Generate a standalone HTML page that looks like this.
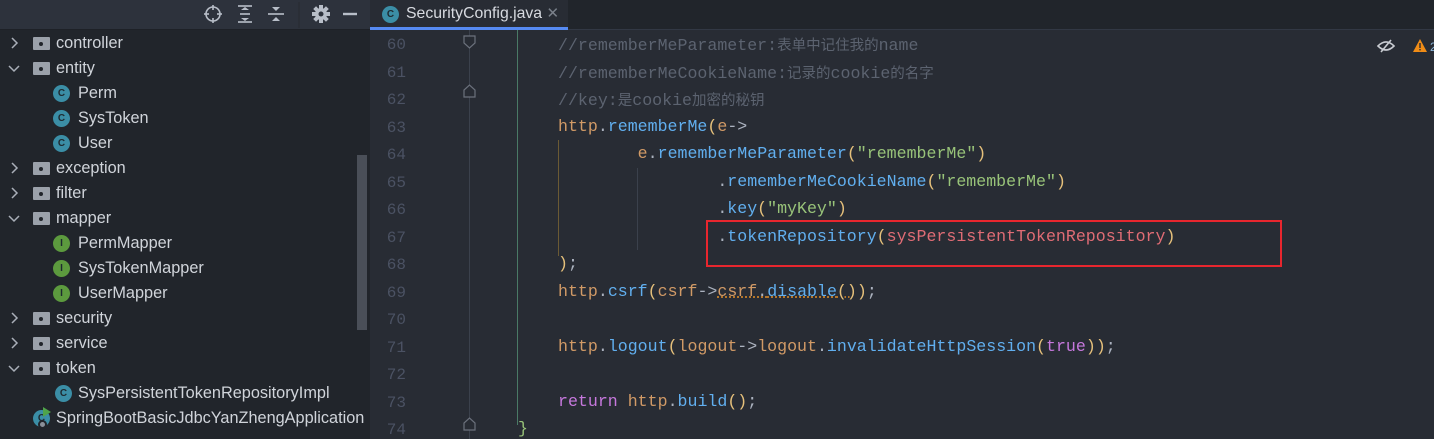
<!DOCTYPE html>
<html><head><meta charset="utf-8"><style>
*{margin:0;padding:0;box-sizing:border-box}
body{width:1434px;height:439px;overflow:hidden;background:#282c34;position:relative;font-family:"Liberation Sans","Noto Sans CJK SC",sans-serif}
#side{position:absolute;left:0;top:0;width:370px;height:439px;background:#21252b}
#sidehead{position:absolute;left:0;top:0;width:370px;height:30px;background:#2d323c;border-bottom:1px solid #1e2127}
#tabbar{position:absolute;left:370px;top:0;width:1064px;height:30px;background:#21252b;border-bottom:1px solid #323844}
#tab{position:absolute;left:370px;top:0;width:198px;height:30px;background:#282c34;border-bottom:3px solid #568af2;color:#d7dae0;font-size:15.8px;line-height:28px;padding-left:36px}
.ci{position:absolute;width:17px;height:17px;border-radius:50%;background:#3b8ea6;color:#1e2a30;font-size:10px;font-weight:bold;text-align:center;line-height:17px}
.row{position:absolute;height:25px;line-height:25px;color:#d0d4da;font-size:16.3px}
.chev{position:absolute;width:12px;height:12px}
.fold{position:absolute;width:17px;height:13px;background:#9ba1aa;border-radius:1px}
.fold::after{content:"";position:absolute;left:6px;top:5px;width:4px;height:4px;background:#21252b;border-radius:50%}
.ln{position:absolute;left:370px;width:36px;text-align:right;color:#4b5263;font-family:"Liberation Mono",monospace;font-size:16px}
.code{position:absolute;left:558px;font-family:"Liberation Mono","Noto Sans CJK SC",monospace;font-size:16.6px;color:#abb2bf;white-space:pre}
.cm{color:#5c6370}.o{color:#d19a66}.f{color:#61afef}.p{color:#e5c07b}.s{color:#98c379}.k{color:#c678dd}.r{color:#e06c75}
.cj{font-size:14.5px}
</style></head><body>
<div id="side"></div>
<div id="sidehead"></div>
<div id="tabbar"></div>
<div id="tab"><div class="ci" style="left:12px;top:6px">C</div>SecurityConfig.java <span style="color:#7a808a;font-size:15px">&#x2715;</span></div>
<svg style="position:absolute;left:200px;top:2px" width="170" height="26" viewBox="0 0 170 26">
<g stroke="#b8bec8" stroke-width="1.6" fill="none">
<circle cx="13" cy="12" r="7"/><line x1="13" y1="3" x2="13" y2="8"/><line x1="13" y1="16" x2="13" y2="21"/><line x1="4" y1="12" x2="9" y2="12"/><line x1="17" y1="12" x2="22" y2="12"/>
<line x1="38" y1="4" x2="52" y2="4"/><line x1="38" y1="20" x2="52" y2="20"/><line x1="40" y1="12" x2="50" y2="12"/>
<line x1="68" y1="12" x2="84" y2="12"/>
<line x1="143" y1="12" x2="157" y2="12" stroke-width="2.4"/>
</g>
<g fill="#b8bec8"><path d="M41 8 L45 5 L49 8Z"/><path d="M41 16 L45 19 L49 16Z"/><path d="M72 5 L80 5 L76 9Z"/><path d="M72 19 L80 19 L76 15Z"/>
<circle cx="121" cy="12" r="6"/><rect x="119" y="3" width="4" height="18"/><rect x="112" y="10" width="18" height="4"/><rect x="119" y="3" width="4" height="18" transform="rotate(45 121 12)"/><rect x="119" y="3" width="4" height="18" transform="rotate(-45 121 12)"/></g>
<circle cx="121" cy="12" r="2.5" fill="#2d323c"/>
<line x1="99" y1="0" x2="99" y2="28" stroke="#262a31"/>
</svg>
<svg style="position:absolute;left:0;top:0" width="30" height="439"><g stroke="#a9afb8" stroke-width="1.5" fill="none">
<path d="M12 38l5 5-5 5"/><path d="M9 66l5 5 5-5"/><path d="M12 163l5 5-5 5"/><path d="M12 188l5 5-5 5"/><path d="M9 216l5 5 5-5"/><path d="M12 313l5 5-5 5"/><path d="M12 338l5 5-5 5"/><path d="M9 366l5 5 5-5"/></g></svg>
<div class="fold" style="left:33px;top:37px"></div><div class="row" style="left:56px;top:31px">controller</div>
<div class="fold" style="left:33px;top:62px"></div><div class="row" style="left:56px;top:56px">entity</div>
<div class="ci" style="left:53px;top:85px">C</div><div class="row" style="left:78px;top:81px">Perm</div>
<div class="ci" style="left:53px;top:110px">C</div><div class="row" style="left:78px;top:106px">SysToken</div>
<div class="ci" style="left:53px;top:135px">C</div><div class="row" style="left:78px;top:131px">User</div>
<div class="fold" style="left:33px;top:162px"></div><div class="row" style="left:56px;top:156px">exception</div>
<div class="fold" style="left:33px;top:187px"></div><div class="row" style="left:56px;top:181px">filter</div>
<div class="fold" style="left:33px;top:212px"></div><div class="row" style="left:56px;top:206px">mapper</div>
<div class="ci" style="left:53px;top:235px;background:#5c9a3e">I</div><div class="row" style="left:78px;top:231px">PermMapper</div>
<div class="ci" style="left:53px;top:260px;background:#5c9a3e">I</div><div class="row" style="left:78px;top:256px">SysTokenMapper</div>
<div class="ci" style="left:53px;top:285px;background:#5c9a3e">I</div><div class="row" style="left:78px;top:281px">UserMapper</div>
<div class="fold" style="left:33px;top:312px"></div><div class="row" style="left:56px;top:306px">security</div>
<div class="fold" style="left:33px;top:337px"></div><div class="row" style="left:56px;top:331px">service</div>
<div class="fold" style="left:33px;top:362px"></div><div class="row" style="left:56px;top:356px">token</div>
<div class="ci" style="left:55px;top:385px">C</div><div class="row" style="left:78px;top:381px">SysPersistentTokenRepositoryImpl</div>
<div class="ci" style="left:33px;top:410px">C</div><div style="position:absolute;left:43px;top:407px;width:0;height:0;border-left:8px solid #4fa44a;border-top:5px solid transparent;border-bottom:5px solid transparent"></div><div style="position:absolute;left:38px;top:420px;width:9px;height:9px;border-radius:50%;background:#8a9099;border:2px solid #21252b"></div><div class="row" style="left:56px;top:406px">SpringBootBasicJdbcYanZhengApplication</div>
<div style="position:absolute;left:357px;top:155px;width:10px;height:175px;background:#4a4f58"></div>
<div style="position:absolute;left:469px;top:30px;width:1px;height:409px;background:#3b414c"></div>
<div style="position:absolute;left:517px;top:30px;width:1px;height:395px;background:#4a7a66"></div>
<div style="position:absolute;left:558px;top:140px;width:1px;height:116px;background:#6b5a34"></div>
<div style="position:absolute;left:637px;top:168px;width:1px;height:82px;background:#3b414c"></div>
<svg style="position:absolute;left:463px;top:35px" width="14" height="400"><g stroke="#6b717c" fill="#282c34" stroke-width="1.2"><path d="M1 1H12V8L6.5 13L1 8Z"/><path d="M1 62H12V55L6.5 50L1 55Z"/><path d="M1 395H12V388L6.5 383L1 388Z"/></g></svg>
<div class="ln" style="top:36px">60</div><div class="ln" style="top:64px">61</div><div class="ln" style="top:91px">62</div><div class="ln" style="top:119px">63</div><div class="ln" style="top:146px">64</div><div class="ln" style="top:174px">65</div><div class="ln" style="top:201px">66</div><div class="ln" style="top:229px">67</div><div class="ln" style="top:256px">68</div><div class="ln" style="top:284px">69</div><div class="ln" style="top:311px">70</div><div class="ln" style="top:339px">71</div><div class="ln" style="top:366px">72</div><div class="ln" style="top:394px">73</div><div class="ln" style="top:421px">74</div>
<div class="code cm" style="top:34px">//rememberMeParameter:<span class="cj">表单中记住我的</span>name</div>
<div class="code cm" style="top:62px">//rememberMeCookieName:<span class="cj">记录的</span>cookie<span class="cj">的名字</span></div>
<div class="code cm" style="top:89px">//key:<span class="cj">是</span>cookie<span class="cj">加密的秘钥</span></div>
<div class="code" style="top:117px"><span class="o">http</span>.<span class="f">rememberMe</span><span class="p">(</span><span class="o">e</span>-&gt;</div>
<div class="code" style="top:144px">        <span class="o">e</span>.<span class="f">rememberMeParameter</span><span class="p">(</span><span class="s">"rememberMe"</span><span class="p">)</span></div>
<div class="code" style="top:172px">                .<span class="f">rememberMeCookieName</span><span class="p">(</span><span class="s">"rememberMe"</span><span class="p">)</span></div>
<div class="code" style="top:199px">                .<span class="f">key</span><span class="p">(</span><span class="s">"myKey"</span><span class="p">)</span></div>
<div class="code" style="top:227px">                .<span class="f">tokenRepository</span><span class="p">(</span><span class="r">sysPersistentTokenRepository</span><span class="p">)</span></div>
<div class="code" style="top:254px"><span class="p">)</span>;</div>
<div class="code" style="top:282px"><span class="o">http</span>.<span class="f">csrf</span><span class="p">(</span><span class="o">csrf</span>-&gt;<span class="o" style="text-decoration:underline dotted #c7802a">csrf</span><span style="text-decoration:underline dotted #c7802a">.<span class="f">disable</span><span class="p">()</span></span><span class="p">)</span>;</div>
<div class="code" style="top:337px"><span class="o">http</span>.<span class="f">logout</span><span class="p">(</span><span class="o">logout</span>-&gt;<span class="o">logout</span>.<span class="f">invalidateHttpSession</span><span class="p">(</span><span class="k">true</span><span class="p">))</span>;</div>
<div class="code" style="top:392px"><span class="k">return</span> <span class="o">http</span>.<span class="f">build</span><span class="p">()</span>;</div>
<div class="code" style="top:419px;left:518px;color:#98c379">}</div>
<div style="position:absolute;left:706px;top:220px;width:576px;height:47px;border:2px solid #e8262e"></div>
<svg style="position:absolute;left:1376px;top:36px" width="58" height="20"><g stroke="#c9ccd2" stroke-width="1.6" fill="none"><path d="M2 10Q10 2 18 10Q10 18 2 10Z"/><line x1="5" y1="16" x2="15" y2="4"/></g><path d="M44 3L51 16H37Z" fill="#f08c16"/><rect x="43.3" y="7" width="1.4" height="5" fill="#282c34"/><rect x="43.3" y="13" width="1.4" height="1.4" fill="#282c34"/><text x="54" y="15" font-size="12" fill="#8ab4d8" font-family="Liberation Sans">2</text></svg>
</body></html>
